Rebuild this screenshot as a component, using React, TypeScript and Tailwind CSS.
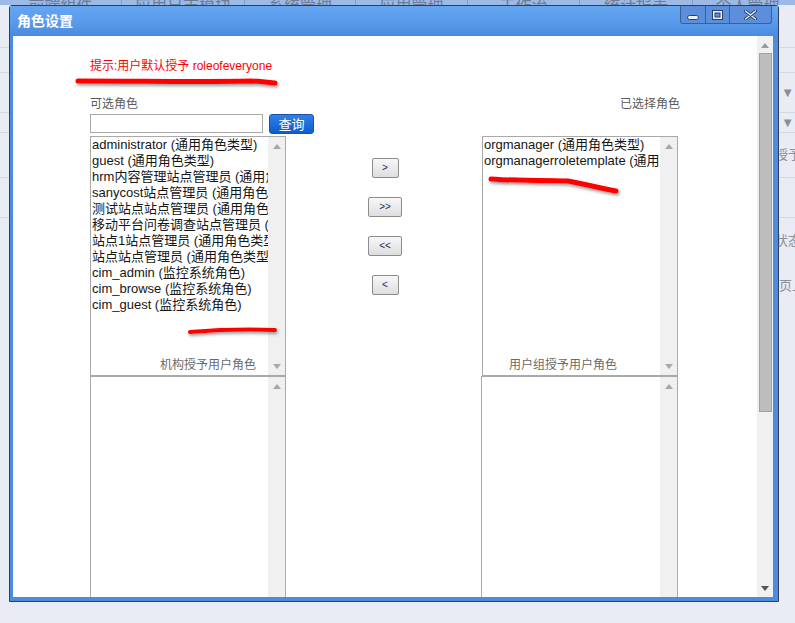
import React from 'react';

const leftRoles = [
  'administrator (通用角色类型)',
  'guest (通用角色类型)',
  'hrm内容管理站点管理员 (通用角色类型)',
  'sanycost站点管理员 (通用角色类型)',
  '测试站点站点管理员 (通用角色类型)',
  '移动平台问卷调查站点管理员 (通用角色类型)',
  '站点1站点管理员 (通用角色类型)',
  '站点站点管理员 (通用角色类型)',
  'cim_admin (监控系统角色)',
  'cim_browse (监控系统角色)',
  'cim_guest (监控系统角色)',
];

const rightRoles = ['orgmanager (通用角色类型)', 'orgmanagerroletemplate (通用角色类型)'];

const navItems = [
  { name: '前端组件', w: 'w-[122px]' },
  { name: '应用日志模块', w: 'w-[123px]' },
  { name: '系统管理', w: 'w-[111px]' },
  { name: '应用管理', w: 'w-[112px]' },
  { name: '工作流', w: 'w-[112px]' },
  { name: '统计报表', w: 'w-[113px]' },
  { name: '个人管理', w: 'w-[110px]' },
];

const UpArrow = ({ color = '#a8a8a8' }: { color?: string }) => (
  <svg width="8" height="5" viewBox="0 0 8 5">
    <path d="M0 5 L4 0 L8 5 Z" fill={color} />
  </svg>
);

const DownArrow = ({ color = '#a8a8a8' }: { color?: string }) => (
  <svg width="8" height="5" viewBox="0 0 8 5">
    <path d="M0 0 L4 5 L8 0 Z" fill={color} />
  </svg>
);

interface ListBoxProps {
  items?: string[];
  label?: string;
  labelClass?: string;
}

const ListBox: React.FC<ListBoxProps> = ({ items = [], label, labelClass }) => (
  <div className="relative h-[240px] border border-[#a9a9a9] bg-white flex">
    <div className="flex-1 overflow-hidden whitespace-nowrap text-[13px] leading-[16px] text-[#151515] pl-px">
      {items.map(item => (
        <div key={item}>{item}</div>
      ))}
    </div>
    <div className="w-[17px] bg-[#f0f0f0] flex flex-col items-center justify-between pt-[7px] pb-[6px]">
      <UpArrow />
      <DownArrow />
    </div>
    {label && (
      <span className={`absolute bottom-[2px] text-[12px] leading-[16px] text-[#6a6a6a] ${labelClass}`}>{label}</span>
    )}
  </div>
);

const MoveButton = ({ text, wide }: { text: string; wide?: boolean }) => (
  <button
    className={`h-[20px] ${wide ? 'w-[34px]' : 'w-[27px]'} rounded-[2px] border border-[#8c8c8c] bg-gradient-to-b from-[#f7f7f7] to-[#dedede] text-[10px] leading-none text-[#1a2a5a]`}
  >
    {text}
  </button>
);

export default function App() {
  return (
    <div className="relative w-[795px] h-[623px] overflow-hidden bg-[#e9ecf5] font-['Liberation_Sans','Noto_Sans_CJK_SC',sans-serif]">
      {/* page behind the dialog */}
      <div className="h-[5px] bg-[#9db9e6] flex items-end overflow-hidden">
        {navItems.map(n => (
          <div key={n.name} className={`${n.w} shrink-0 text-center text-[16px] leading-[12px] text-[#6b7b98] border-r border-[#7f9ccc] -mb-[7px]`}>
            {n.name}
          </div>
        ))}
      </div>
      <div className="flex flex-col">
        <div className="h-[43px] border-b border-[#d3d8e3]" />
        <div className="h-[25px] border-b border-[#d3d8e3]" />
        <div className="h-[40px] border-b border-[#d3d8e3] flex justify-end items-center pr-px text-[13px] text-[#8a8f99]">▼</div>
        <div className="h-[20px] border-b border-[#d3d8e3] flex justify-end items-center pr-px text-[13px] text-[#8a8f99]">▼</div>
        <div className="h-[45px] border-b border-[#d3d8e3] flex justify-end items-center -mr-[6px] text-[13px] text-[#8a8f99]">授予</div>
        <div className="h-[40px] border-b border-[#d3d8e3]" />
        <div className="h-[45px] flex justify-end items-center -mr-[6px] text-[13px] text-[#8a8f99]">状态</div>
        <div className="h-[45px] flex justify-end items-center -mr-[10px] text-[13px] text-[#8a8f99]">页上</div>
      </div>

      {/* dialog window */}
      <div className="absolute left-[9px] top-[5px] w-[770px] h-[597px] border border-[#2f3e5c] bg-[#4b8ce0] rounded-t-[3px] flex flex-col">
        <div className="h-[30px] shrink-0 flex items-start justify-between bg-gradient-to-b from-[#64a6f0] via-[#5a9cec] to-[#4a8ade] pl-[7px]">
          <span className="mt-[7px] text-[14px] leading-[16px] font-bold text-white">角色设置</span>
          <div className="flex h-[18px] mr-[6px] border border-t-0 border-[#3c5f96] rounded-b-[3px] bg-[#5b8fdc] overflow-hidden">
            <div className="w-[25px] flex items-end justify-center pb-[3px] border-r border-[#3c5f96]">
              <svg width="12" height="5" viewBox="0 0 12 5">
                <rect x="0.5" y="0.5" width="11" height="4" rx="2" fill="#e8f0ff" stroke="#2a3f66" />
              </svg>
            </div>
            <div className="w-[24px] flex items-center justify-center border-r border-[#3c5f96]">
              <svg width="11" height="10" viewBox="0 0 11 10">
                <rect x="0.5" y="0.5" width="10" height="9" fill="#e8f0ff" stroke="#2a3f66" />
                <rect x="3" y="3" width="5" height="4" fill="#5b8fdc" stroke="#2a3f66" />
              </svg>
            </div>
            <div className="w-[41px] flex items-center justify-center">
              <svg width="13" height="10" viewBox="0 0 13 10">
                <path d="M1.5 1 L11.5 9 M11.5 1 L1.5 9" stroke="#2a3f66" strokeWidth="3.2" strokeLinecap="round" />
                <path d="M1.5 1 L11.5 9 M11.5 1 L1.5 9" stroke="#e8f0ff" strokeWidth="1.4" strokeLinecap="round" />
              </svg>
            </div>
          </div>
        </div>

        <div className="flex-1 pl-[3px] pr-[5px] pb-[4px] flex min-h-0">
          <div className="flex-1 bg-white flex min-h-0">
            <div className="flex-1 overflow-hidden pl-[77px] pt-[22px]">
              <div className="text-[12px] leading-[16px] text-[#ff0000]">
                提示:用户默认授予 <span className="font-['Liberation_Sans',sans-serif]">roleofeveryone</span>
              </div>

              <div className="mt-[22px] w-[588px] flex justify-between text-[12px] leading-[16px] text-[#5a5a5a]">
                <span>可选角色</span>
                <span className="-mr-[2px]">已选择角色</span>
              </div>

              <div className="mt-[2px] flex items-start gap-[6px]">
                <input className="w-[173px] h-[19px] border border-[#a9a9a9] outline-none" />
                <button className="w-[45px] h-[20px] rounded-[3px] border border-[#1d4fa6] bg-gradient-to-b from-[#2f80e6] to-[#0a5ed0] text-[13px] leading-none text-white">
                  查询
                </button>
              </div>

              <div className="mt-[2px] grid grid-cols-[196px_196px_196px]">
                <ListBox items={leftRoles} label="机构授予用户角色" labelClass="left-[69px]" />
                <div className="flex flex-col items-center gap-[19px] pt-[22px] pl-[2px]">
                  <MoveButton text=">" />
                  <MoveButton text=">>" wide />
                  <MoveButton text="<<" wide />
                  <MoveButton text="<" />
                </div>
                <ListBox items={rightRoles} label="用户组授予用户角色" labelClass="left-[26px]" />
                <ListBox />
                <div />
                <div className="-ml-px">
                  <ListBox />
                </div>
              </div>
            </div>

            {/* dialog scrollbar */}
            <div className="w-[16px] bg-[#f0f0f0] flex flex-col items-center pt-[7px] pb-[6px]">
              <UpArrow color="#9a9a9a" />
              <div className="mt-[5px] w-[13px] h-[359px] bg-[#bdbdbd] border border-[#a2a2a2]" />
              <div className="flex-1" />
              <DownArrow color="#555555" />
            </div>
          </div>
        </div>
      </div>

      {/* red marker annotations */}
      <svg className="absolute inset-0 pointer-events-none" width="795" height="623" viewBox="0 0 795 623">
        <defs>
          <filter id="sh" x="-5%" y="-100%" width="110%" height="300%">
            <feDropShadow dx="1" dy="2" stdDeviation="1.4" floodColor="#555" floodOpacity="0.6" />
          </filter>
        </defs>
        <g filter="url(#sh)" fill="none" stroke="#ff0000" strokeLinecap="round">
          <path d="M78 81 C 140 81, 210 82, 250 81 C 262 81, 270 83, 275 83" strokeWidth="5" />
          <path d="M190 332 C 215 330, 245 329, 275 330" strokeWidth="4" />
          <path d="M491 179 C 515 181, 545 180, 568 181 C 585 184, 600 188, 616 191" strokeWidth="5" />
        </g>
      </svg>
    </div>
  );
}
